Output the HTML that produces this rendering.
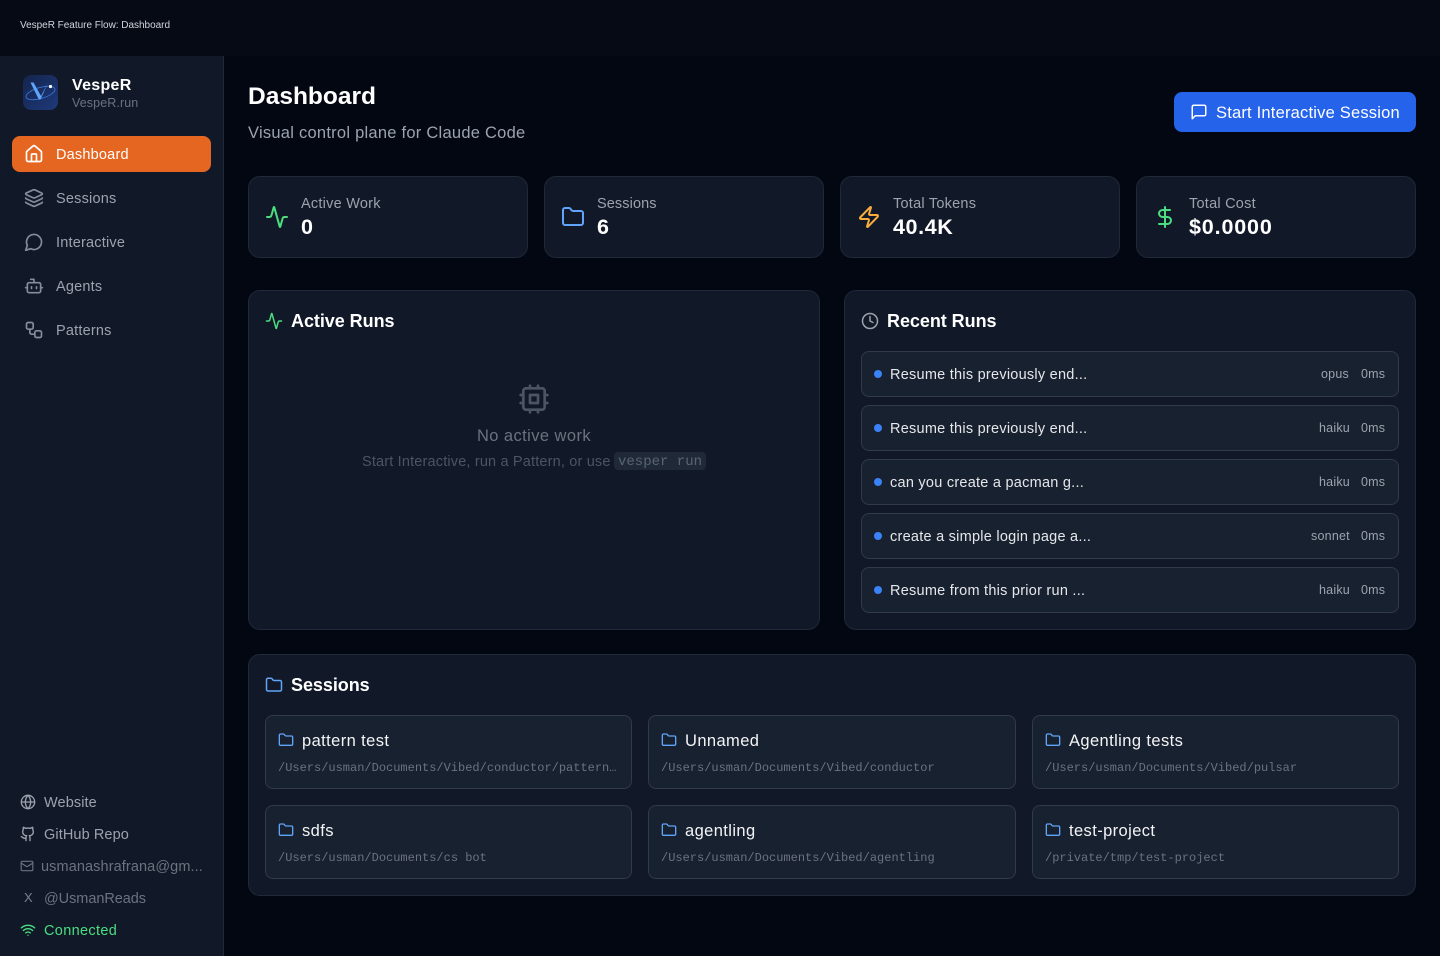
<!DOCTYPE html>
<html lang="en">
<head>
<meta charset="utf-8">
<title>VespeR Feature Flow: Dashboard</title>
<style>
*{box-sizing:border-box}
html,body{margin:0;padding:0;width:1440px;height:956px;overflow:hidden;background:#030712;font-family:"Liberation Sans",sans-serif;color:#fff}
.t{position:absolute;white-space:nowrap;line-height:20px}
.b{position:absolute}
svg.i{position:absolute;fill:none;stroke:currentColor;stroke-width:2;stroke-linecap:round;stroke-linejoin:round}
.card{position:absolute;background:#111827;border:1px solid #1f2937;border-radius:12px}
.run{position:absolute;left:861px;width:538px;height:46px;background:#18212f;border:1px solid #2f3a4b;border-radius:8px}
.dot{position:absolute;left:874px;width:8px;height:8px;border-radius:50%;background:#3b82f6}
.rt{font-size:14.5px;color:#e5e7eb;left:890px;letter-spacing:.25px}
.rm{font-size:12.5px;color:#9ca3af;letter-spacing:.22px}
.ses{position:absolute;height:74px;background:#18212f;border:1px solid #2f3a4b;border-radius:8px}
.sn{font-size:16.5px;color:#f3f4f6;letter-spacing:.4px}
.sp{font-family:"Liberation Mono",monospace;font-size:12px;color:#6b7280}
.nav{font-size:14.5px;color:#9ca3af;left:56px;letter-spacing:.2px}
.lab{font-size:14.5px;color:#9ca3af;letter-spacing:.24px}
.val{font-size:21.5px;font-weight:700;color:#fff;letter-spacing:.7px;line-height:24px}
.h{font-size:18px;font-weight:700;color:#fff;letter-spacing:-.05px}
.foot{font-size:14.5px;letter-spacing:.1px}
</style>
</head>
<body>
<!-- top bar -->
<div class="b" style="left:0;top:0;width:1440px;height:56px;background:#060a15"></div>
<div class="t" style="left:20px;top:18px;font-size:10px;color:#d1d5db;letter-spacing:-.02px;line-height:16px">VespeR Feature Flow: Dashboard</div>

<!-- sidebar -->
<div class="b" style="left:0;top:56px;width:224px;height:900px;background:#111827;border-right:1px solid #1f2937"></div>
<svg class="b" style="left:23px;top:75px" width="35" height="35" viewBox="0 0 35 35">
<defs><linearGradient id="lg" x1="0" y1="0" x2="1" y2="1"><stop offset="0" stop-color="#14244c"/><stop offset="1" stop-color="#1e3a7a"/></linearGradient></defs>
<rect width="35" height="35" rx="8" fill="url(#lg)"/>
<ellipse cx="17.5" cy="18" rx="15" ry="5.5" transform="rotate(-16 17.5 18)" fill="none" stroke="#3b72d6" stroke-width=".9"/>
<polygon points="7.5,7.5 10.5,7.5 18,21 24.7,8.5 17.5,24.5 15.8,24.5" fill="#60a5fa"/>
<circle cx="27.5" cy="11.5" r="1.6" fill="#fff"/>
</svg>
<div class="t" style="left:72px;top:76px;font-size:16px;font-weight:700;color:#fff;letter-spacing:.3px">VespeR</div>
<div class="t" style="left:72px;top:93px;font-size:12.5px;color:#6b7280;letter-spacing:.1px">VespeR.run</div>

<div class="b" style="left:12px;top:136px;width:199px;height:36px;background:#e56620;border-radius:8px"></div>
<svg class="i" style="left:24px;top:144px;color:#fff" width="20" height="20" viewBox="0 0 24 24"><path d="M15 21v-8a1 1 0 0 0-1-1h-4a1 1 0 0 0-1 1v8"/><path d="M3 10a2 2 0 0 1 .709-1.528l7-5.999a2 2 0 0 1 2.582 0l7 5.999A2 2 0 0 1 21 10v9a2 2 0 0 1-2 2H5a2 2 0 0 1-2-2z"/></svg>
<div class="t nav" style="top:145px;color:#fff">Dashboard</div>

<svg class="i" style="left:24px;top:188px;color:#858d9b" width="20" height="20" viewBox="0 0 24 24"><path d="M12.83 2.18a2 2 0 0 0-1.66 0L2.6 6.08a1 1 0 0 0 0 1.83l8.58 3.91a2 2 0 0 0 1.66 0l8.58-3.9a1 1 0 0 0 0-1.83z"/><path d="M2 12a1 1 0 0 0 .58.91l8.6 3.91a2 2 0 0 0 1.65 0l8.58-3.9A1 1 0 0 0 22 12"/><path d="M2 17a1 1 0 0 0 .58.91l8.6 3.91a2 2 0 0 0 1.65 0l8.58-3.9A1 1 0 0 0 22 17"/></svg>
<div class="t nav" style="top:189px">Sessions</div>

<svg class="i" style="left:24px;top:232px;color:#858d9b" width="20" height="20" viewBox="0 0 24 24"><path d="M7.9 20A9 9 0 1 0 4 16.1L2 22Z"/></svg>
<div class="t nav" style="top:233px">Interactive</div>

<svg class="i" style="left:24px;top:276px;color:#858d9b" width="20" height="20" viewBox="0 0 24 24"><path d="M12 8V4H8"/><rect x="4" y="8" width="16" height="12" rx="2"/><path d="M2 14h2"/><path d="M20 14h2"/><path d="M15 13v2"/><path d="M9 13v2"/></svg>
<div class="t nav" style="top:277px">Agents</div>

<svg class="i" style="left:24px;top:320px;color:#858d9b" width="20" height="20" viewBox="0 0 24 24"><rect x="3" y="3" width="8" height="8" rx="2"/><path d="M7 11v4a2 2 0 0 0 2 2h4"/><rect x="13" y="13" width="8" height="8" rx="2"/></svg>
<div class="t nav" style="top:321px">Patterns</div>

<svg class="i" style="left:20px;top:794px;color:#9ca3af" width="16" height="16" viewBox="0 0 24 24"><circle cx="12" cy="12" r="10"/><path d="M12 2a14.5 14.5 0 0 0 0 20 14.5 14.5 0 0 0 0-20"/><path d="M2 12h20"/></svg>
<div class="t foot" style="left:44px;top:793px;color:#9ca3af">Website</div>
<svg class="i" style="left:20px;top:826px;color:#9ca3af" width="16" height="16" viewBox="0 0 24 24"><path d="M15 22v-4a4.8 4.8 0 0 0-1-3.5c3 0 6-2 6-5.5.08-1.25-.27-2.48-1-3.5.28-1.15.28-2.35 0-3.5 0 0-1 0-3 1.5-2.64-.5-5.36-.5-8 0C6 2 5 2 5 2c-.3 1.15-.3 2.35 0 3.5A5.4 5.4 0 0 0 4 9c0 3.5 3 5.5 6 5.5-.39.49-.68 1.05-.85 1.65-.17.6-.22 1.23-.15 1.85v4"/><path d="M9 18c-4.51 2-5-2-7-2"/></svg>
<div class="t foot" style="left:44px;top:825px;color:#9ca3af">GitHub Repo</div>
<svg class="i" style="left:20px;top:859px;color:#6b7280" width="14" height="14" viewBox="0 0 24 24"><rect x="2" y="4" width="20" height="16" rx="2"/><path d="m22 7-8.97 5.7a1.94 1.94 0 0 1-2.06 0L2 7"/></svg>
<div class="t foot" style="left:41px;top:857px;color:#6b7280;letter-spacing:.1px">usmanashrafrana@gm...</div>
<div class="t" style="left:24px;top:888px;font-size:13px;color:#7a8290">X</div>
<div class="t foot" style="left:44px;top:889px;color:#6b7280;letter-spacing:-.05px">@UsmanReads</div>
<svg class="i" style="left:20px;top:922px;color:#4ade80" width="16" height="16" viewBox="0 0 24 24"><path d="M12 20h.01"/><path d="M2 8.82a15 15 0 0 1 20 0"/><path d="M5 12.859a10 10 0 0 1 14 0"/><path d="M8.5 16.429a5 5 0 0 1 7 0"/></svg>
<div class="t foot" style="left:44px;top:921px;color:#4ade80;letter-spacing:.33px">Connected</div>

<!-- header -->
<div class="t" style="left:248px;top:81px;font-size:24.5px;font-weight:700;line-height:32px;color:#fff">Dashboard</div>
<div class="t" style="left:248px;top:124px;font-size:16.5px;color:#9ca3af;letter-spacing:.25px;line-height:18px">Visual control plane for Claude Code</div>
<div class="b" style="left:1174px;top:92px;width:242px;height:40px;background:#2563eb;border-radius:8px"></div>
<svg class="i" style="left:1190px;top:103px;color:#fff" width="18" height="18" viewBox="0 0 24 24"><path d="M21 15a2 2 0 0 1-2 2H7l-4 4V5a2 2 0 0 1 2-2h14a2 2 0 0 1 2 2z"/></svg>
<div class="t" style="left:1216px;top:103px;font-size:16.5px;color:#fff;letter-spacing:.2px">Start Interactive Session</div>

<!-- stat cards -->
<div class="card" style="left:248px;top:176px;width:280px;height:82px"></div>
<svg class="i" style="left:265px;top:205px;color:#4ade80" width="24" height="24" viewBox="0 0 24 24"><path d="M22 12h-2.48a2 2 0 0 0-1.93 1.46l-2.35 8.36a.25.25 0 0 1-.48 0L9.24 2.18a.25.25 0 0 0-.48 0l-2.35 8.36A2 2 0 0 1 4.49 12H2"/></svg>
<div class="t lab" style="left:301px;top:194px">Active Work</div>
<div class="t val" style="left:301px;top:215px">0</div>

<div class="card" style="left:544px;top:176px;width:280px;height:82px"></div>
<svg class="i" style="left:561px;top:205px;color:#60a5fa" width="24" height="24" viewBox="0 0 24 24"><path d="M20 20a2 2 0 0 0 2-2V8a2 2 0 0 0-2-2h-7.9a2 2 0 0 1-1.69-.9L9.6 3.9A2 2 0 0 0 7.93 3H4a2 2 0 0 0-2 2v13a2 2 0 0 0 2 2Z"/></svg>
<div class="t lab" style="left:597px;top:194px;letter-spacing:.1px">Sessions</div>
<div class="t val" style="left:597px;top:215px">6</div>

<div class="card" style="left:840px;top:176px;width:280px;height:82px"></div>
<svg class="i" style="left:857px;top:205px;stroke:#f8ad3d" width="24" height="24" viewBox="0 0 24 24"><path d="M4 14a1 1 0 0 1-.78-1.63l9.9-10.2a.5.5 0 0 1 .86.46l-1.92 6.02A1 1 0 0 0 13 10h7a1 1 0 0 1 .78 1.63l-9.9 10.2a.5.5 0 0 1-.86-.46l1.92-6.02A1 1 0 0 0 11 14z"/></svg>
<div class="t lab" style="left:893px;top:194px">Total Tokens</div>
<div class="t val" style="left:893px;top:215px;letter-spacing:.6px">40.4K</div>

<div class="card" style="left:1136px;top:176px;width:280px;height:82px"></div>
<svg class="i" style="left:1153px;top:205px;color:#4ade80" width="24" height="24" viewBox="0 0 24 24"><line x1="12" x2="12" y1="2" y2="22"/><path d="M17 5H9.5a3.5 3.5 0 0 0 0 7h5a3.5 3.5 0 0 1 0 7H6"/></svg>
<div class="t lab" style="left:1189px;top:194px">Total Cost</div>
<div class="t val" style="left:1189px;top:215px;letter-spacing:.85px">$0.0000</div>

<!-- active runs -->
<div class="card" style="left:248px;top:290px;width:572px;height:340px"></div>
<svg class="i" style="left:265px;top:312px;color:#4ade80" width="18" height="18" viewBox="0 0 24 24"><path d="M22 12h-2.48a2 2 0 0 0-1.93 1.46l-2.35 8.36a.25.25 0 0 1-.48 0L9.24 2.18a.25.25 0 0 0-.48 0l-2.35 8.36A2 2 0 0 1 4.49 12H2"/></svg>
<div class="t h" style="left:291px;top:311px">Active Runs</div>
<svg class="i" style="left:518px;top:383px;color:#4b5563" width="32" height="32" viewBox="0 0 24 24"><rect x="4" y="4" width="16" height="16" rx="2"/><rect x="9" y="9" width="6" height="6"/><path d="M15 2v2"/><path d="M15 20v2"/><path d="M2 15h2"/><path d="M2 9h2"/><path d="M20 15h2"/><path d="M20 9h2"/><path d="M9 2v2"/><path d="M9 20v2"/></svg>
<div class="t" style="left:248px;width:572px;text-align:center;top:426px;font-size:16.5px;color:#6b7280;letter-spacing:.42px">No active work</div>
<div class="t" style="left:362px;top:452px;font-size:14.5px;color:#4b5563;letter-spacing:.17px">Start Interactive, run a Pattern, or use</div>
<div class="b" style="left:614px;top:452px;width:92px;height:18px;background:#1f2937;border-radius:4px"></div>
<div class="t" style="left:618px;top:452px;font-family:'Liberation Mono',monospace;font-size:14px;color:#5a6473">vesper run</div>

<!-- recent runs -->
<div class="card" style="left:844px;top:290px;width:572px;height:340px"></div>
<svg class="i" style="left:861px;top:312px;color:#9ca3af" width="18" height="18" viewBox="0 0 24 24"><circle cx="12" cy="12" r="10"/><path d="M12 6v6l4 2"/></svg>
<div class="t h" style="left:887px;top:311px">Recent Runs</div>

<div class="run" style="top:351px"></div><div class="dot" style="top:370px"></div>
<div class="t rt" style="top:365px">Resume this previously end...</div>
<div class="t rm" style="left:1321px;top:364px">opus</div><div class="t rm" style="left:1361px;top:364px">0ms</div>

<div class="run" style="top:405px"></div><div class="dot" style="top:424px"></div>
<div class="t rt" style="top:419px">Resume this previously end...</div>
<div class="t rm" style="left:1319px;top:418px">haiku</div><div class="t rm" style="left:1361px;top:418px">0ms</div>

<div class="run" style="top:459px"></div><div class="dot" style="top:478px"></div>
<div class="t rt" style="top:473px">can you create a pacman g...</div>
<div class="t rm" style="left:1319px;top:472px">haiku</div><div class="t rm" style="left:1361px;top:472px">0ms</div>

<div class="run" style="top:513px"></div><div class="dot" style="top:532px"></div>
<div class="t rt" style="top:527px">create a simple login page a...</div>
<div class="t rm" style="left:1311px;top:526px">sonnet</div><div class="t rm" style="left:1361px;top:526px">0ms</div>

<div class="run" style="top:567px"></div><div class="dot" style="top:586px"></div>
<div class="t rt" style="top:581px">Resume from this prior run ...</div>
<div class="t rm" style="left:1319px;top:580px">haiku</div><div class="t rm" style="left:1361px;top:580px">0ms</div>

<!-- sessions -->
<div class="card" style="left:248px;top:654px;width:1168px;height:242px"></div>
<svg class="i" style="left:265px;top:676px;color:#60a5fa" width="18" height="18" viewBox="0 0 24 24"><path d="M20 20a2 2 0 0 0 2-2V8a2 2 0 0 0-2-2h-7.9a2 2 0 0 1-1.69-.9L9.6 3.9A2 2 0 0 0 7.93 3H4a2 2 0 0 0-2 2v13a2 2 0 0 0 2 2Z"/></svg>
<div class="t h" style="left:291px;top:675px">Sessions</div>

<div class="ses" style="left:265px;top:715px;width:367px"></div>
<svg class="i" style="left:278px;top:732px;color:#60a5fa" width="16" height="16" viewBox="0 0 24 24"><path d="M20 20a2 2 0 0 0 2-2V8a2 2 0 0 0-2-2h-7.9a2 2 0 0 1-1.69-.9L9.6 3.9A2 2 0 0 0 7.93 3H4a2 2 0 0 0-2 2v13a2 2 0 0 0 2 2Z"/></svg>
<div class="t sn" style="left:302px;top:731px">pattern test</div>
<div class="t sp" style="left:278px;top:758px">/Users/usman/Documents/Vibed/conductor/pattern…</div>

<div class="ses" style="left:648px;top:715px;width:368px"></div>
<svg class="i" style="left:661px;top:732px;color:#60a5fa" width="16" height="16" viewBox="0 0 24 24"><path d="M20 20a2 2 0 0 0 2-2V8a2 2 0 0 0-2-2h-7.9a2 2 0 0 1-1.69-.9L9.6 3.9A2 2 0 0 0 7.93 3H4a2 2 0 0 0-2 2v13a2 2 0 0 0 2 2Z"/></svg>
<div class="t sn" style="left:685px;top:731px">Unnamed</div>
<div class="t sp" style="left:661px;top:758px">/Users/usman/Documents/Vibed/conductor</div>

<div class="ses" style="left:1032px;top:715px;width:367px"></div>
<svg class="i" style="left:1045px;top:732px;color:#60a5fa" width="16" height="16" viewBox="0 0 24 24"><path d="M20 20a2 2 0 0 0 2-2V8a2 2 0 0 0-2-2h-7.9a2 2 0 0 1-1.69-.9L9.6 3.9A2 2 0 0 0 7.93 3H4a2 2 0 0 0-2 2v13a2 2 0 0 0 2 2Z"/></svg>
<div class="t sn" style="left:1069px;top:731px">Agentling tests</div>
<div class="t sp" style="left:1045px;top:758px">/Users/usman/Documents/Vibed/pulsar</div>

<div class="ses" style="left:265px;top:805px;width:367px"></div>
<svg class="i" style="left:278px;top:822px;color:#60a5fa" width="16" height="16" viewBox="0 0 24 24"><path d="M20 20a2 2 0 0 0 2-2V8a2 2 0 0 0-2-2h-7.9a2 2 0 0 1-1.69-.9L9.6 3.9A2 2 0 0 0 7.93 3H4a2 2 0 0 0-2 2v13a2 2 0 0 0 2 2Z"/></svg>
<div class="t sn" style="left:302px;top:821px">sdfs</div>
<div class="t sp" style="left:278px;top:848px">/Users/usman/Documents/cs bot</div>

<div class="ses" style="left:648px;top:805px;width:368px"></div>
<svg class="i" style="left:661px;top:822px;color:#60a5fa" width="16" height="16" viewBox="0 0 24 24"><path d="M20 20a2 2 0 0 0 2-2V8a2 2 0 0 0-2-2h-7.9a2 2 0 0 1-1.69-.9L9.6 3.9A2 2 0 0 0 7.93 3H4a2 2 0 0 0-2 2v13a2 2 0 0 0 2 2Z"/></svg>
<div class="t sn" style="left:685px;top:821px">agentling</div>
<div class="t sp" style="left:661px;top:848px">/Users/usman/Documents/Vibed/agentling</div>

<div class="ses" style="left:1032px;top:805px;width:367px"></div>
<svg class="i" style="left:1045px;top:822px;color:#60a5fa" width="16" height="16" viewBox="0 0 24 24"><path d="M20 20a2 2 0 0 0 2-2V8a2 2 0 0 0-2-2h-7.9a2 2 0 0 1-1.69-.9L9.6 3.9A2 2 0 0 0 7.93 3H4a2 2 0 0 0-2 2v13a2 2 0 0 0 2 2Z"/></svg>
<div class="t sn" style="left:1069px;top:821px">test-project</div>
<div class="t sp" style="left:1045px;top:848px">/private/tmp/test-project</div>
</body>
</html>
